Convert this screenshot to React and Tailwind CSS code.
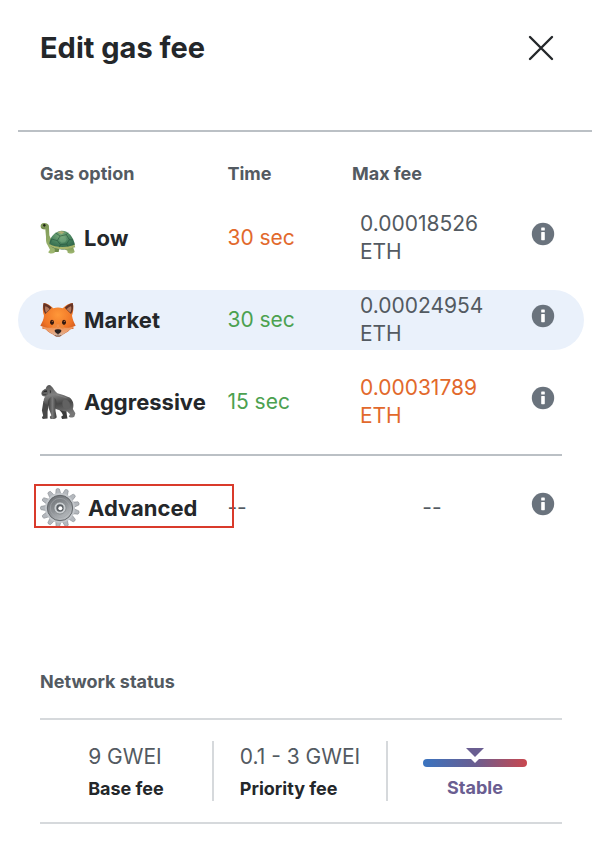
import clsx from "clsx";

function Turtle() {
  return (
    <svg viewBox="0 0 108 96" className="h-8 w-9 shrink-0" aria-hidden="true">
      <defs>
        <radialGradient id="shell" cx="0.45" cy="0.25" r="0.75">
          <stop offset="0" stopColor="#7fae7c" />
          <stop offset="0.5" stopColor="#4b8560" />
          <stop offset="1" stopColor="#2c6248" />
        </radialGradient>
        <linearGradient id="turtleSkin" x1="0" y1="0" x2="0" y2="1">
          <stop offset="0" stopColor="#7c9655" />
          <stop offset="1" stopColor="#9fb871" />
        </linearGradient>
      </defs>
      <path d="M88 70 104 72 106 76 94 78Z" fill="#8aa560" />
      <path d="M40 72 58 78 56 90 40 90 38 84Z" fill="#6d8a4a" />
      <path
        d="M2 14C1 6 7 2 14 3C24 4 28 9 27 17L28 40C31 50 40 60 45 68L44 92C38 96 25 95 25 90L30 83L23 70C17 62 18 52 18 44L16 22C9 23 3 20 2 14Z"
        fill="url(#turtleSkin)"
      />
      <path d="M74 74 98 72 104 89C102 95 88 96 83 92L82 86 74 82Z" fill="url(#turtleSkin)" />
      <path
        d="M28 66C29 46 44 28 64 26C85 25 100 44 105 68C98 78 79 83 60 82C45 82 34 77 28 66Z"
        fill="url(#shell)"
      />
      <path d="M28 66C45 77 84 79 105 67L102 74C84 86 45 83 30 72Z" fill="#a9b56b" />
      <path
        d="M47 33 60 42 79 38 84 32M60 42 52 56 61 68 80 66 88 53 79 38M52 56 35 51M88 53 99 54M61 68 58 76M80 66 84 74M35 51 31 62"
        fill="none"
        stroke="#28573f"
        strokeWidth="2"
      />
      <path d="M52 31 62 27 74 30 65 36Z" fill="#b0ae74" />
      <path d="M62 46 75 43 80 53 75 61 65 62 58 56Z" fill="#78ab84" opacity="0.55" />
      <ellipse cx="13" cy="10" rx="3.5" ry="4" fill="#1e2316" />
      <path d="M4 17C9 20 12 19 15 17" stroke="#596b3b" strokeWidth="1.5" fill="none" />
    </svg>
  );
}

function Fox() {
  return (
    <svg viewBox="0 0 108 106" className="h-9 w-9 shrink-0" aria-hidden="true">
      <defs>
        <radialGradient id="foxFace" cx="0.5" cy="0.35" r="0.65">
          <stop offset="0" stopColor="#ff9839" />
          <stop offset="0.65" stopColor="#ef7426" />
          <stop offset="1" stopColor="#c65220" />
        </radialGradient>
        <linearGradient id="muzzle" x1="0" y1="0" x2="0" y2="1">
          <stop offset="0" stopColor="#f08a45" />
          <stop offset="0.6" stopColor="#eba273" />
          <stop offset="1" stopColor="#c9bcb5" />
        </linearGradient>
      </defs>
      <path
        d="M11 2C22 3 32 10 40 18C49 15 59 15 68 18C77 9 88 2 98 2C102 13 100 30 96 40C98 50 101 59 107 70L99 73L101 79L91 81C83 91 70 95 63 101C58 105 50 105 45 101C36 94 24 91 17 81L7 79L9 73L1 70C7 59 11 50 12 40C8 30 7 13 11 2Z"
        fill="url(#foxFace)"
      />
      <path d="M11 2C21 4 28 9 35 16L16 35C9 24 8 12 11 2Z" fill="#653426" />
      <path d="M98 2C88 4 81 9 74 16L93 35C100 24 101 12 98 2Z" fill="#653426" />
      <path d="M16 12C22 14 26 17 29 21L18 31C15 24 14 18 16 12Z" fill="#b4775a" />
      <path d="M93 12C87 14 83 17 80 21L91 31C94 24 95 18 93 12Z" fill="#b4775a" />
      <path
        d="M5 70C14 75 24 77 33 76C43 75 46 65 54 65C62 65 66 75 76 76C85 77 95 75 103 70L98 78L89 82C78 91 69 95 62 101C57 104 51 104 46 101C38 94 27 91 17 81L8 78Z"
        fill="url(#muzzle)"
      />
      <path d="M45 50C50 61 50 75 54 80C58 75 58 61 64 50C67 68 77 76 69 79C61 76 57 74 54 74C50 74 44 78 38 78C32 75 43 67 45 50Z" fill="#ee873b" />
      <ellipse cx="36" cy="60" rx="6" ry="8" fill="#32180f" />
      <ellipse cx="72" cy="60" rx="6" ry="8" fill="#32180f" />
      <circle cx="37" cy="57" r="2" fill="#bc6d41" />
      <circle cx="73" cy="57" r="2" fill="#bc6d41" />
      <path d="M44 84C47 80 61 80 64 84C65 89 59 94 54 95C49 94 43 89 44 84Z" fill="#29201f" />
      <path d="M54 94V99M45 99C50 102 58 102 63 99" stroke="#584640" strokeWidth="2" fill="none" />
    </svg>
  );
}

function Gorilla() {
  return (
    <svg viewBox="0 0 114 112" className="h-9 w-9 shrink-0" aria-hidden="true">
      <defs>
        <linearGradient id="fur" x1="0" y1="0" x2="0.2" y2="1">
          <stop offset="0" stopColor="#515151" />
          <stop offset="0.35" stopColor="#818181" />
          <stop offset="0.65" stopColor="#484848" />
          <stop offset="1" stopColor="#777" />
        </linearGradient>
        <linearGradient id="arm" x1="0" y1="0" x2="1" y2="0">
          <stop offset="0" stopColor="#3b3b3b" />
          <stop offset="0.5" stopColor="#7b7b7b" />
          <stop offset="1" stopColor="#393939" />
        </linearGradient>
      </defs>
      <path d="M58 77 83 79 85 97 87 108 70 110 67 103 73 98 69 90Z" fill="#3b3b3b" />
      <path d="M11 52 28 61 24 87 24 108 9 110 6 105 10 99 6 83Z" fill="#484848" />
      <path
        d="M18 15C20 3 30-1 36 6C43 12 46 22 55 28C71 31 83 38 94 42C104 49 109 65 104 78L112 92L109 102C105 106 94 106 91 102L95 95L86 86L76 85L54 80L17 62C9 54 12 44 16 39C9 39 2 33 5 25C7 20 12 17 18 15Z"
        fill="url(#fur)"
      />
      <path
        d="M35 40C50 39 55 51 50 67L49 84L53 104C50 110 37 112 32 108L31 103L36 98L28 77C25 60 23 47 35 40Z"
        fill="url(#arm)"
      />
      <path d="M76 48C91 47 99 62 93 74C88 81 77 80 73 71C70 62 69 54 76 48Z" fill="#626262" />
      <path d="M18 14C10 18 5 23 6 31C9 37 19 38 24 33C28 26 25 17 18 14Z" fill="#656565" />
      <path d="M12 20 22 19 22 24 11 25Z" fill="#292929" />
      <path d="M7 28 11 27M8 33 20 33" stroke="#252525" strokeWidth="2" />
      <path d="M31 18C37 18 36 29 31 29Z" fill="#383838" />
      <path d="M51 33 84 43" stroke="#999" strokeWidth="2" fill="none" opacity="0.6" />
    </svg>
  );
}

const teeth = Array.from({ length: 13 }, (_, i) => (i * 360) / 13);

function Gear() {
  return (
    <svg viewBox="0 0 120 120" className="size-10 shrink-0" aria-hidden="true">
      <defs>
        <linearGradient id="steel" x1="0.2" y1="0" x2="0.8" y2="1">
          <stop offset="0" stopColor="#6c7074" />
          <stop offset="0.5" stopColor="#8f9397" />
          <stop offset="1" stopColor="#c3c7ca" />
        </linearGradient>
      </defs>
      {teeth.map((angle) => (
        <path
          key={angle}
          d="M52 20 55 3Q60-1 65 3L68 20Z"
          fill="#b4b8bd"
          stroke="#7d8287"
          strokeWidth="1.5"
          transform={`rotate(${angle - 7} 60 60)`}
        />
      ))}
      <circle cx="60" cy="60" r="45" fill="#c3c7cb" />
      <circle cx="60" cy="60" r="38" fill="url(#steel)" stroke="#63676b" strokeWidth="3" />
      <circle cx="60" cy="60" r="29" fill="none" stroke="#a4a8ac" strokeWidth="2" />
      <circle cx="60" cy="60" r="18" fill="#c9cdd0" stroke="#777b7f" strokeWidth="2" />
      <circle cx="60" cy="60" r="11" fill="#5a5f64" />
      <circle cx="61" cy="61" r="6" fill="#fff" />
    </svg>
  );
}

function InfoButton({ label }) {
  return (
    <button type="button" aria-label={`About ${label}`} className="block cursor-pointer">
      <svg viewBox="0 0 24 24" className="size-6" aria-hidden="true">
        <circle cx="12" cy="12" r="11.2" fill="#6a737d" />
        <rect x="10.2" y="5.5" width="3.6" height="3" rx="0.6" fill="#fff" />
        <rect x="10.2" y="10" width="3.6" height="8.2" rx="0.6" fill="#fff" />
      </svg>
    </button>
  );
}

const options = [
  { name: "Low", icon: <Turtle />, time: "30 sec", timeColor: "text-[#e2692c]", fee: "0.00018526 ETH" },
  {
    name: "Market",
    icon: <Fox />,
    time: "30 sec",
    timeColor: "text-[#4ca150]",
    fee: "0.00024954 ETH",
    selected: true,
  },
  {
    name: "Aggressive",
    icon: <Gorilla />,
    time: "15 sec",
    timeColor: "text-[#4ca150]",
    fee: "0.00031789 ETH",
    feeColor: "text-[#e2692c]",
  },
];

function OptionRow({ option }) {
  const bg = option.selected && "bg-[#eaf1fb]";
  return (
    <tr className="h-15">
      <th scope="row" className={clsx("rounded-l-full p-0 pl-[22px]", bg)}>
        <button type="button" className="flex cursor-pointer items-center gap-2 text-[22px] font-bold text-[#24272a]">
          {option.icon}
          {option.name}
        </button>
      </th>
      <td className={clsx("p-0", option.timeColor, bg)}>{option.time}</td>
      <td className={clsx("p-0 pl-2", option.feeColor || "text-[#535a61]", bg)}>
        <div className="w-32">{option.fee}</div>
      </td>
      <td className={clsx("rounded-r-full p-0 pb-2 pl-[27px]", bg)}>
        <InfoButton label={option.name} />
      </td>
    </tr>
  );
}

function GasOptions() {
  return (
    <table className="w-full table-fixed border-separate border-spacing-x-0 border-spacing-y-[22px] text-left text-[21px] leading-7">
      <colgroup>
        <col className="w-[37%]" />
        <col className="w-[22%]" />
        <col />
        <col className="w-20" />
      </colgroup>
      <thead>
        <tr className="h-8 text-lg leading-6 text-[#535a61]">
          <th scope="col" className="p-0 pt-2 pl-[22px]">
            Gas option
          </th>
          <th scope="col" className="p-0 pt-2">
            Time
          </th>
          <th scope="col" colSpan={2} className="p-0 pt-2">
            Max fee
          </th>
        </tr>
      </thead>
      <tbody>
        {options.map((option) => (
          <OptionRow key={option.name} option={option} />
        ))}
        <tr>
          <td colSpan={4} className="p-0 px-[22px]">
            <hr className="border-t-2 border-[#bbc0c5]" />
          </td>
        </tr>
        <tr className="h-15">
          <th scope="row" className="relative p-0 pl-[22px]">
            <button type="button" className="flex cursor-pointer items-center gap-2 text-[22px] font-bold text-[#24272a]">
              <Gear />
              Advanced
            </button>
            <span className="pointer-events-none absolute top-1.5 left-4 h-11 w-50 border-2 border-[#d93a2b]" />
          </th>
          <td className="p-0 text-[#535a61]">--</td>
          <td className="p-0 pl-2 text-center text-[#535a61]">--</td>
          <td className="p-0 pb-2 pl-[27px]">
            <InfoButton label="Advanced" />
          </td>
        </tr>
      </tbody>
    </table>
  );
}

function Stat({ value, label }) {
  return (
    <div className="flex h-15 justify-center border-r-2 border-[#d6d9dc]">
      <div>
        <p className="text-[21px] leading-8 text-[#535a61]">{value}</p>
        <p className="text-lg leading-8 font-bold text-[#24272a]">{label}</p>
      </div>
    </div>
  );
}

function NetworkStatus() {
  return (
    <section className="mx-[22px] mt-[110px]">
      <h2 className="text-lg leading-6 font-bold text-[#535a61]">Network status</h2>
      <div className="mt-6 grid grid-cols-3 border-y-2 border-[#d6d9dc] py-[21px]">
        <Stat value="9 GWEI" label="Base fee" />
        <Stat value="0.1 - 3 GWEI" label="Priority fee" />
        <div className="flex flex-col items-center gap-2 pt-[7px]">
          <svg viewBox="0 0 104 20" className="h-5 w-26" aria-hidden="true">
            <defs>
              <linearGradient id="congestion">
                <stop offset="0" stopColor="#3a74c0" />
                <stop offset="0.5" stopColor="#6a5e91" />
                <stop offset="1" stopColor="#c9474e" />
              </linearGradient>
            </defs>
            <rect y="11" width="104" height="8" rx="4" fill="url(#congestion)" />
            <path d="M45 8H59L52 15Z" fill="#fff" />
            <path d="M43 0H61L52 9Z" fill="#6a5e91" />
          </svg>
          <p className="text-lg leading-6 font-bold text-[#6a5e91]">Stable</p>
        </div>
      </div>
    </section>
  );
}

export default function App() {
  return (
    <main className="bg-white pr-[22px] pb-8 pl-[18px] font-['Inter',sans-serif]">
      <header className="-mr-2 flex h-[132px] items-center justify-between border-b-2 border-[#bbc0c5] pr-[35px] pb-[34px] pl-[22px]">
        <h1 className="text-[29px] font-bold text-[#24272a]">Edit gas fee</h1>
        <button type="button" aria-label="Close" className="cursor-pointer">
          <svg viewBox="0 0 32 32" className="size-8" aria-hidden="true">
            <path d="M5 5 27 27M27 5 5 27" stroke="#24272a" strokeWidth="2.4" strokeLinecap="round" />
          </svg>
        </button>
      </header>
      <GasOptions />
      <NetworkStatus />
    </main>
  );
}
